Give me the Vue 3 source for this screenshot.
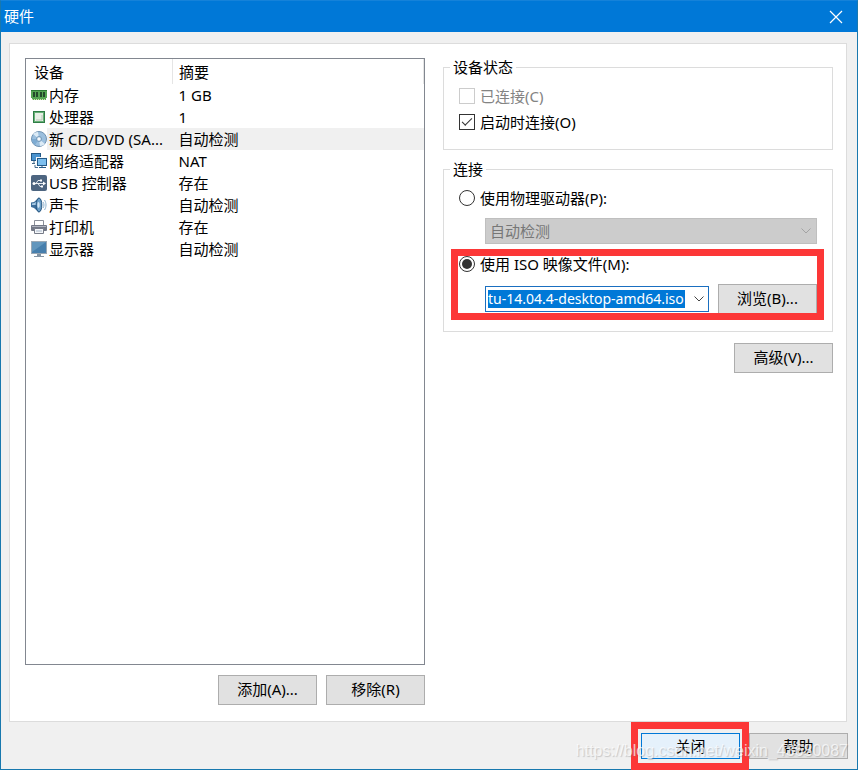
<script setup>
import { ref } from 'vue'

const devices = [
  { icon: 'memory', name: '内存', summary: '1 GB' },
  { icon: 'cpu', name: '处理器', summary: '1' },
  { icon: 'disc', name: '新 CD/DVD (SA...', summary: '自动检测' },
  { icon: 'network', name: '网络适配器', summary: 'NAT' },
  { icon: 'usb', name: 'USB 控制器', summary: '存在' },
  { icon: 'sound', name: '声卡', summary: '自动检测' },
  { icon: 'printer', name: '打印机', summary: '存在' },
  { icon: 'display', name: '显示器', summary: '自动检测' }
]
const selected = ref(2)
const connectAtPowerOn = ref(true)
const source = ref('iso')
const isoPath = ref('tu-14.04.4-desktop-amd64.iso')
</script>

<template>
  <div class="window">
    <header class="titlebar">
      <h1>硬件</h1>
      <button class="close" type="button" aria-label="关闭窗口">
        <svg width="14" height="14" viewBox="0 0 14 14"><path d="M1 1L13 13M13 1L1 13" stroke="#fff" stroke-width="1.2" fill="none" /></svg>
      </button>
    </header>

    <main class="panel">
      <section class="left">
        <div class="list">
          <table>
            <thead>
              <tr><th class="name">设备</th><th>摘要</th></tr>
            </thead>
            <tbody>
              <tr v-for="(d, i) in devices" :key="d.icon" :class="{ selected: i === selected }" @click="selected = i">
                <td>
                  <div class="device">
                    <svg class="icon" viewBox="0 0 16 16" width="16" height="16">
                      <g v-if="d.icon === 'memory'">
                        <path d="M0 3h16v8h-1v2H1v-2H0z" fill="#55a552" />
                        <path d="M0 3h16v1H0z" fill="#2c7a34" />
                        <path d="M2 5h2v5H2zM5 5h2v5H5zM9 5h2v5H9zM12 5h2v5h-2z" fill="#234a2a" />
                        <path d="M1 12.500h14" stroke="#d3dfb0" stroke-dasharray="1 1" />
                      </g>
                      <g v-else-if="d.icon === 'cpu'">
                        <rect x="2" y="2" width="12" height="12" fill="#2f7d46" />
                        <rect x="3" y="3" width="10" height="10" fill="#67b077" />
                        <rect x="4" y="4" width="8" height="8" fill="#e8efe6" />
                        <path d="M5 11h6V6" stroke="#b7c4b7" fill="none" />
                      </g>
                      <g v-else-if="d.icon === 'disc'">
                        <circle cx="8" cy="8" r="7.5" fill="#9bbfde" stroke="#6f92b2" />
                        <path d="M8 8L2 3A8 8 0 0 1 7 1zM8 8L14 13A8 8 0 0 1 9 15z" fill="#dcebf6" />
                        <path d="M8 8L1 8A7 7 0 0 0 4 14z" fill="#7dabd2" />
                        <circle cx="8" cy="8" r="2.5" fill="#d9e7f2" stroke="#7197b8" />
                        <circle cx="8" cy="8" r="1" fill="#fff" />
                      </g>
                      <g v-else-if="d.icon === 'network'">
                        <rect x="0.5" y="0.5" width="9" height="7" fill="#4a93cf" stroke="#245a88" />
                        <path d="M3 8v2M1 10.500h3M4 12v2.500h3" stroke="#456a8a" fill="none" />
                        <rect x="5.500" y="4.500" width="10" height="8" fill="#78b9e9" stroke="#f4f8fb" />
                        <rect x="6.500" y="5.500" width="9" height="7" fill="#7dbfee" stroke="#245a88" />
                        <path d="M11 12v2M8 14.500h7" stroke="#245a88" />
                      </g>
                      <g v-else-if="d.icon === 'usb'">
                        <rect x="0" y="0" width="16" height="16" rx="2" fill="#4d6580" />
                        <path d="M2 8.500h11M5 8.500l2-3h2M7 8.500l2 3h2" stroke="#e8edf2" fill="none" />
                        <circle cx="3" cy="8.500" r="1.500" fill="#fff" />
                        <path d="M12 6.500l3 2-3 2zM9 4.500h2v2H9zM10 10.500h2v2h-2z" fill="#fff" />
                      </g>
                      <g v-else-if="d.icon === 'sound'">
                        <path d="M0 5.500L3 5l5-4.500v15L3 11 0 10z" fill="#3c6e9b" />
                        <path d="M1 6.500L3.500 6 7 3v5H1z" fill="#a9cbe5" />
                        <ellipse cx="8" cy="8" rx="2.800" ry="7" fill="#6c9fc8" stroke="#24547f" />
                        <ellipse cx="7.500" cy="8" rx="1.200" ry="3" fill="#d2e5f4" />
                        <path d="M12 5c1.300 2 1.300 4 0 6M13.500 3c2 3 2 7 0 10" stroke="#8db2d0" fill="none" />
                      </g>
                      <g v-else-if="d.icon === 'printer'">
                        <path d="M3.500 1.500h9v5h-9z" fill="#fff" stroke="#8b8f99" />
                        <rect x="0" y="6" width="16" height="6" rx="1" fill="#737886" />
                        <path d="M1 7.500h14" stroke="#aeb2bd" />
                        <path d="M3.500 9.500h9v5h-9z" fill="#f4f6f9" stroke="#777c89" />
                        <path d="M5 12h6" stroke="#a7b6c8" />
                      </g>
                      <g v-else>
                        <rect x="0.500" y="0.500" width="15" height="12" fill="#477fad" stroke="#9aa8b5" />
                        <path d="M1 1h14L1 11z" fill="#6296bd" />
                        <path d="M6 13h4v2H6z" fill="#8494a3" />
                        <path d="M3 15.500h10" stroke="#8494a3" />
                      </g>
                    </svg>
                    <span>{{ d.name }}</span>
                  </div>
                </td>
                <td>{{ d.summary }}</td>
              </tr>
            </tbody>
          </table>
        </div>
        <div class="actions">
          <button class="btn" type="button">添加(A)...</button>
          <button class="btn" type="button">移除(R)</button>
        </div>
      </section>

      <section class="right">
        <fieldset>
          <legend>设备状态</legend>
          <label class="option disabled"><input type="checkbox" disabled />已连接(C)</label>
          <label class="option"><input v-model="connectAtPowerOn" type="checkbox" />启动时连接(O)</label>
        </fieldset>

        <fieldset>
          <legend>连接</legend>
          <label class="option"><input v-model="source" type="radio" name="source" value="drive" />使用物理驱动器(P):</label>
          <div class="drive">
            <select disabled aria-label="物理驱动器"><option>自动检测</option></select>
            <svg class="chevron" width="10" height="6" viewBox="0 0 10 6"><path d="M0.500 0.500L5 5L9.500 0.500" stroke="#a3a3a3" fill="none" /></svg>
          </div>
          <div class="iso">
            <label class="option"><input v-model="source" type="radio" name="source" value="iso" />使用 ISO 映像文件(M):</label>
            <div class="file">
              <div class="combo">
                <input v-model="isoPath" type="text" aria-label="ISO 映像文件" />
                <button type="button" aria-label="展开列表">
                  <svg width="10" height="6" viewBox="0 0 10 6"><path d="M0.500 0.500L5 5L9.500 0.500" stroke="#444" fill="none" /></svg>
                </button>
              </div>
              <button class="btn" type="button">浏览(B)...</button>
            </div>
            <div class="highlight"></div>
          </div>
        </fieldset>
        <button class="btn advanced" type="button">高级(V)...</button>
      </section>
    </main>

    <footer class="footer">
      <div class="primary">
        <button class="btn default" type="button">关闭</button>
        <div class="highlight"></div>
      </div>
      <button class="btn" type="button">帮助</button>
      <span class="watermark">https://blog.csdn.net/weixin_43680087</span>
    </footer>
  </div>
</template>

<style>
body {
  margin: 0;
}
</style>

<style scoped>
.window {
  box-sizing: border-box;
  display: flex;
  flex-direction: column;
  min-height: 100vh;
  border: 1px solid #1878ae;
  border-top-color: #1582d9;
  background: #f0f0f0;
  color: #000;
  font: 15px/20px "Noto Sans", "Noto Sans CJK SC", sans-serif;
}
button,
input,
select {
  margin: 0;
  font: inherit;
  color: inherit;
}
.titlebar {
  display: flex;
  align-items: center;
  justify-content: space-between;
  height: 31px;
  padding: 0 14px 0 3px;
  background: #0078d7;
  color: #fff;
}
h1 {
  margin: 0;
  padding-bottom: 2px;
  font-size: 15px;
  font-weight: 400;
  line-height: 20px;
}
.close {
  display: flex;
  padding: 0;
  border: 0;
  background: none;
}
.panel {
  flex: 1;
  display: grid;
  grid-template-columns: 400fr 390fr;
  gap: 18px;
  margin: 11px 10px 0 8px;
  padding: 14px 13px 16px 15px;
  border: 1px solid #dcdcdc;
  background: #fff;
}
.left,
.right {
  display: flex;
  flex-direction: column;
  min-width: 0;
}
.left {
  gap: 10px;
}
.right {
  gap: 9px;
  margin-top: -1px;
}
.list {
  flex: 1;
  border: 1px solid #828790;
}
table {
  width: 100%;
  table-layout: fixed;
  border-collapse: collapse;
}
th {
  height: 25px;
  padding: 0 0 0 6px;
  border-right: 1px solid #e5e5e5;
  font-weight: 400;
  text-align: left;
}
th.name {
  width: 138px;
  padding-left: 8px;
}
td {
  height: 22px;
  padding: 0 0 0 6px;
  white-space: nowrap;
}
td:first-child {
  padding-left: 5px;
}
.device {
  display: flex;
  align-items: center;
}
.device span {
  flex: 1;
  padding: 1px 0 1px 2px;
}
.icon {
  flex: none;
}
.selected td:last-child,
.selected .device span {
  background: #f0f0f0;
}
.actions {
  display: flex;
  justify-content: flex-end;
  gap: 9px;
}
.btn {
  box-sizing: border-box;
  width: 99px;
  height: 30px;
  padding: 0 0 2px;
  border: 1px solid #adadad;
  background: #e1e1e1;
}
fieldset {
  min-width: 0;
  margin: 0;
  padding: 6px 15px 14px;
  border: 1px solid #dcdcdc;
}
fieldset + fieldset {
  padding-bottom: 17px;
}
legend {
  height: 20px;
  margin-left: -9px;
  padding: 0 3px;
}
.option {
  display: flex;
  align-items: center;
  gap: 5px;
  height: 26px;
}
.disabled {
  color: #838383;
}
.option input {
  appearance: none;
  box-sizing: border-box;
  display: grid;
  place-content: center;
  width: 16px;
  height: 16px;
  border: 1px solid #333;
  background: #fff;
}
.option input:disabled {
  border-color: #ccc;
}
.option input[type="radio"] {
  border-radius: 50%;
}
.option input[type="radio"]:checked::before {
  content: "";
  width: 10px;
  height: 10px;
  border-radius: 50%;
  background: #333;
}
.option input[type="checkbox"]:checked::before {
  content: "";
  width: 9px;
  height: 4px;
  margin-bottom: 3px;
  border: solid #333;
  border-width: 0 0 1px 1px;
  transform: rotate(-45deg);
}
.drive {
  display: flex;
  position: relative;
  margin: 7px 0 7px 26px;
}
select {
  appearance: none;
  width: 100%;
  height: 26px;
  padding: 0 4px;
  border: 1px solid #bfbfbf;
  border-radius: 0;
  background: #ccc;
  color: #777;
  opacity: 1;
}
.chevron {
  position: absolute;
  top: 10px;
  right: 6px;
}
.iso {
  position: relative;
}
.file {
  display: flex;
  align-items: center;
  gap: 9px;
  margin: 7px 0 0 26px;
}
.combo {
  box-sizing: border-box;
  flex: 1;
  display: flex;
  align-items: center;
  min-width: 0;
  height: 26px;
  padding: 0 4px 0 2px;
  border: 1px solid #1a6fc0;
  background: #fff;
}
.combo input {
  flex: 1;
  min-width: 0;
  height: 18px;
  padding: 0;
  border: 0;
  outline: 0;
  background: #0078d7;
  color: #fff;
  font-size: 14px;
}
.combo button {
  display: flex;
  padding: 0 0 0 9px;
  border: 0;
  background: none;
}
.highlight {
  position: absolute;
  inset: -2px -7px -6px -8px;
  border: 7px solid #fc3737;
  pointer-events: none;
}
.advanced {
  align-self: flex-end;
  margin-top: 2px;
}
.footer {
  position: relative;
  display: flex;
  justify-content: flex-end;
  gap: 9px;
  padding: 11px 9px 10px;
}
.footer .btn {
  height: 26px;
  padding: 0;
}
.footer .default {
  border-color: #0078d7;
  background: #e5f1fb;
}
.primary {
  display: flex;
  position: relative;
}
.primary .highlight {
  inset: -11px -9px -11px -10px;
}
.watermark {
  position: absolute;
  right: 9px;
  bottom: 8px;
  color: rgba(255, 255, 255, 0.7);
  font: 16px/20px "Liberation Sans", sans-serif;
  text-shadow: 1px 1px 1px rgba(120, 120, 120, 0.35);
  pointer-events: none;
}
</style>
